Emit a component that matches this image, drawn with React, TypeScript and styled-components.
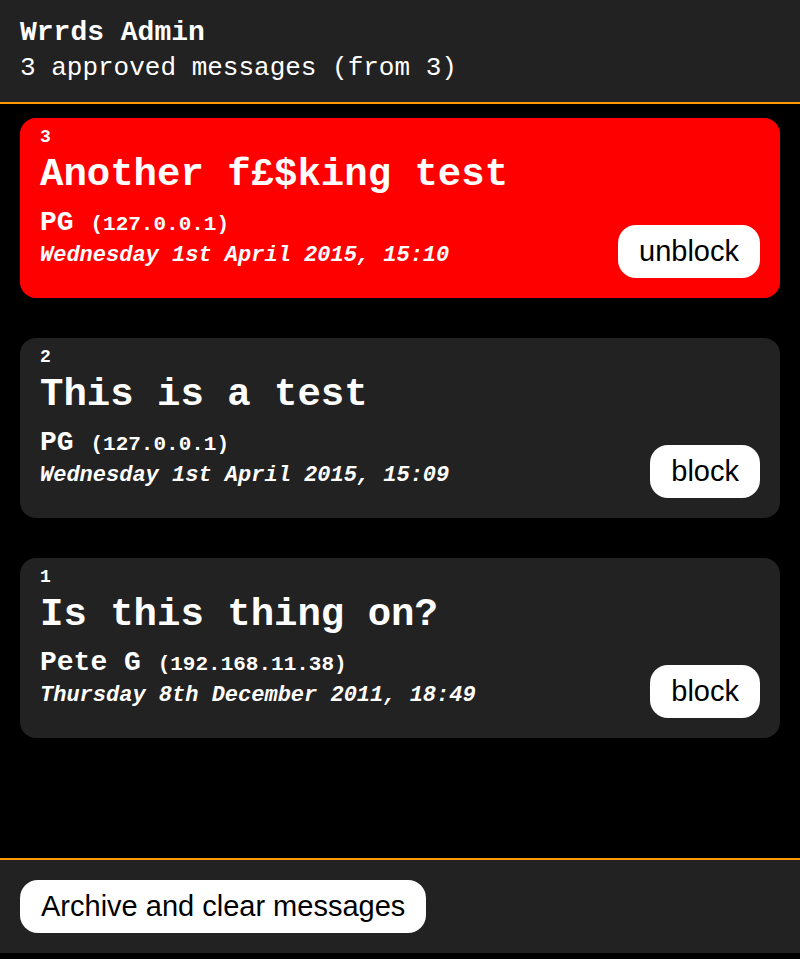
import React from "react";
import styled, { createGlobalStyle } from "styled-components";

const GlobalStyle = createGlobalStyle`
  html, body { margin: 0; padding: 0; background: #000; }
  body { font-family: "Liberation Mono", "Courier New", monospace; color: #fff; }
  * { box-sizing: border-box; }
`;

const Page = styled.div`
  height: 959px;
  display: flex;
  flex-direction: column;
  background: #000;
`;

const Header = styled.header`
  background: #222;
  padding: 16px 20px;
  border-bottom: 2px solid #f90;
`;

const AppTitle = styled.div`
  font-size: 28px;
  line-height: 34px;
  font-weight: bold;
`;

const Subtitle = styled.div`
  font-size: 26px;
  line-height: 36px;
  font-weight: normal;
`;

const Main = styled.main`
  flex: 1;
  padding: 14px 20px;
  display: flex;
  flex-direction: column;
  gap: 40px;
`;

const Card = styled.div<{ $blocked?: boolean }>`
  background: ${(p) => (p.$blocked ? "#ff0000" : "#222")};
  border-radius: 16px;
  padding: 8px 20px 20px;
  display: flex;
  justify-content: space-between;
  align-items: flex-end;
`;

const Info = styled.div`
  display: flex;
  flex-direction: column;
  margin-bottom: 8px;
`;

const Num = styled.div`
  font-size: 18px;
  line-height: 22px;
  font-weight: bold;
`;

const MsgTitle = styled.div`
  font-size: 39px;
  line-height: 55px;
  font-weight: bold;
`;

const Author = styled.div`
  font-size: 28px;
  line-height: 39px;
  height: 39px;
  font-weight: bold;
`;

const Ip = styled.span`
  font-size: 21px;
  line-height: 1;
`;

const DateLine = styled.div`
  font-size: 22px;
  line-height: 28px;
  font-weight: bold;
  font-style: italic;
`;

const Button = styled.button`
  background: #fff;
  color: #000;
  border: none;
  border-radius: 18px;
  font-family: "Liberation Sans", Arial, sans-serif;
  font-size: 29px;
  line-height: 33px;
  padding: 10px 21px;
  cursor: pointer;
`;

const Footer = styled.footer`
  background: #222;
  border-top: 2px solid #f90;
  padding: 20px;
  margin-bottom: 6px;
`;

const messages = [
  {
    id: 3,
    title: "Another f£$king test",
    name: "PG",
    ip: "127.0.0.1",
    date: "Wednesday 1st April 2015, 15:10",
    blocked: true,
  },
  {
    id: 2,
    title: "This is a test",
    name: "PG",
    ip: "127.0.0.1",
    date: "Wednesday 1st April 2015, 15:09",
    blocked: false,
  },
  {
    id: 1,
    title: "Is this thing on?",
    name: "Pete G",
    ip: "192.168.11.38",
    date: "Thursday 8th December 2011, 18:49",
    blocked: false,
  },
];

export default function App() {
  return (
    <>
      <GlobalStyle />
      <Page>
        <Header>
          <AppTitle>Wrrds Admin</AppTitle>
          <Subtitle>3 approved messages (from 3)</Subtitle>
        </Header>
        <Main>
          {messages.map((m) => (
            <Card key={m.id} $blocked={m.blocked}>
              <Info>
                <Num>{m.id}</Num>
                <MsgTitle>{m.title}</MsgTitle>
                <Author>
                  {m.name} <Ip>({m.ip})</Ip>
                </Author>
                <DateLine>{m.date}</DateLine>
              </Info>
              <Button>{m.blocked ? "unblock" : "block"}</Button>
            </Card>
          ))}
        </Main>
        <Footer>
          <Button>Archive and clear messages</Button>
        </Footer>
      </Page>
    </>
  );
}
